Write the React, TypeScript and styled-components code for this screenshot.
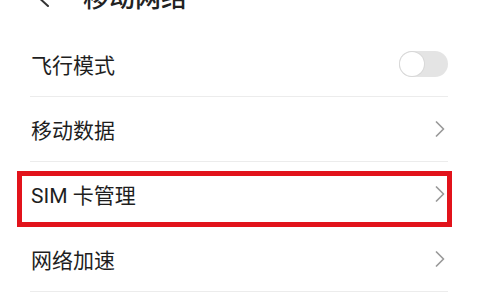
import React from "react";
import styled, { createGlobalStyle } from "styled-components";

const Global = createGlobalStyle`
  html, body { margin: 0; padding: 0; background: #ffffff; }
  body { font-family: Roboto, "Noto Sans CJK SC", sans-serif; color: #1c1c1c; overflow: hidden; }
`;

const Page = styled.div`
  width: 480px;
  height: 300px;
  overflow: hidden;
  background: #fff;
`;

const Header = styled.div`
  display: flex;
  align-items: flex-start;
  height: 49px;
  margin-top: -17px;
  padding-left: 33px;
`;

const BackButton = styled.div`
  width: 18px;
  height: 26px;
  display: flex;
  align-items: center;
  margin-right: 32px;
`;

const Title = styled.h1`
  margin: 0;
  font-size: 26px;
  line-height: 26px;
  font-weight: 500;
  color: #222;
  font-family: "Noto Sans CJK SC", sans-serif;
`;

const List = styled.div`
  display: flex;
  flex-direction: column;
`;

const Row = styled.div`
  position: relative;
  display: flex;
  align-items: center;
  justify-content: space-between;
  height: 64px;
  margin: 0 32px 0 30px;
  padding-left: 1px;
  border-bottom: 1px solid #ececec;
`;

const Label = styled.span`
  font-size: 21px;
  color: #1e1e1e;
  font-family: Roboto, "Noto Sans CJK SC", sans-serif;
`;

const Toggle = styled.div<{ $on?: boolean }>`
  position: relative;
  width: 49px;
  height: 26px;
  border-radius: 13px;
  background: ${(p) => (p.$on ? "#2f7bf6" : "#e4e4e4")};
  display: flex;
  align-items: center;
  justify-content: ${(p) => (p.$on ? "flex-end" : "flex-start")};
`;

const Knob = styled.div`
  width: 24px;
  height: 24px;
  margin: 0 1px;
  border-radius: 50%;
  background: #fff;
  box-shadow: 0 0 0 1px #d8d8d8;
`;

const ChevronWrap = styled.div`
  display: flex;
  align-items: center;
  margin-right: 3px;
`;

const Highlight = styled.div`
  position: absolute;
  left: -13px;
  right: -4px;
  top: 9px;
  bottom: -1px;
  border: 5px solid #e2131b;
  pointer-events: none;
`;

const Chevron = () => (
  <ChevronWrap>
    <svg width="10" height="16" viewBox="0 0 10 16">
      <path d="M1.5 1 L8.5 8 L1.5 15" fill="none" stroke="#9a9a9a" strokeWidth="1.7" strokeLinecap="round" strokeLinejoin="round" />
    </svg>
  </ChevronWrap>
);

export default function App() {
  return (
    <Page>
      <Global />
      <Header>
        <BackButton>
          <svg width="18" height="26" viewBox="0 0 18 26">
            <path d="M15 1 L3 12 L15 23" fill="none" stroke="#333" strokeWidth="2" strokeLinecap="round" strokeLinejoin="round" />
          </svg>
        </BackButton>
        <Title>移动网络</Title>
      </Header>
      <List>
        <Row>
          <Label>飞行模式</Label>
          <Toggle>
            <Knob />
          </Toggle>
        </Row>
        <Row>
          <Label>移动数据</Label>
          <Chevron />
        </Row>
        <Row>
          <Label>SIM 卡管理</Label>
          <Chevron />
          <Highlight />
        </Row>
        <Row>
          <Label>网络加速</Label>
          <Chevron />
        </Row>
      </List>
    </Page>
  );
}
